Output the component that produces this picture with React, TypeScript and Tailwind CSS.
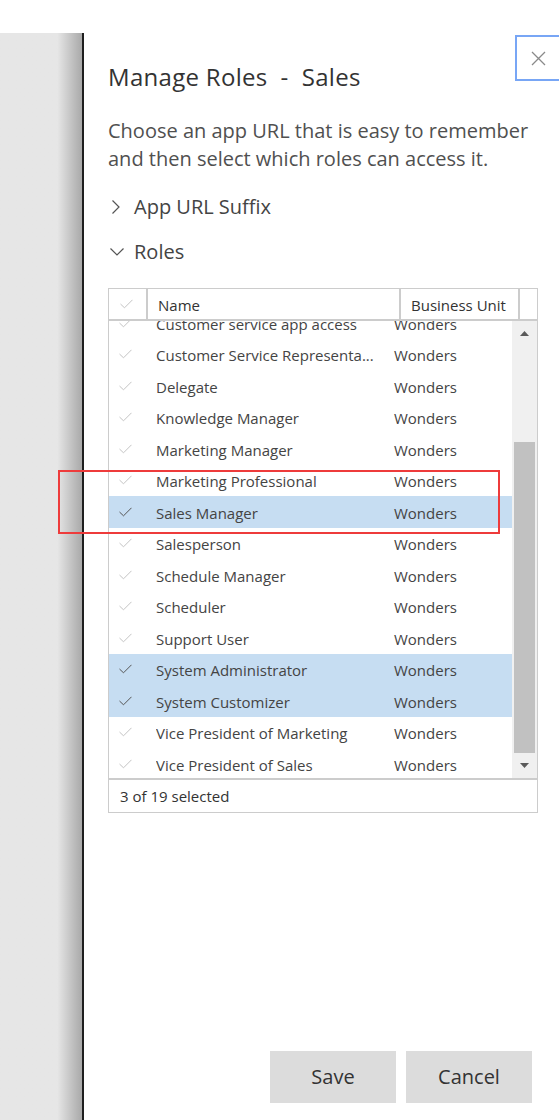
import React from 'react';

const FONT = { fontFamily: '"Open Sans", "Noto Sans", sans-serif' };

interface Role { name: string; unit: string; selected?: boolean }

const ROLES: Role[] = [
  { name: 'Customer service app access', unit: 'Wonders' },
  { name: 'Customer Service Representa...', unit: 'Wonders' },
  { name: 'Delegate', unit: 'Wonders' },
  { name: 'Knowledge Manager', unit: 'Wonders' },
  { name: 'Marketing Manager', unit: 'Wonders' },
  { name: 'Marketing Professional', unit: 'Wonders' },
  { name: 'Sales Manager', unit: 'Wonders', selected: true },
  { name: 'Salesperson', unit: 'Wonders' },
  { name: 'Schedule Manager', unit: 'Wonders' },
  { name: 'Scheduler', unit: 'Wonders' },
  { name: 'Support User', unit: 'Wonders' },
  { name: 'System Administrator', unit: 'Wonders', selected: true },
  { name: 'System Customizer', unit: 'Wonders', selected: true },
  { name: 'Vice President of Marketing', unit: 'Wonders' },
  { name: 'Vice President of Sales', unit: 'Wonders' },
];

function Check({ dark }: { dark?: boolean }) {
  return (
    <svg width="13" height="10" viewBox="0 0 13 10" fill="none">
      <polyline
        points="0.5,5 4.5,8.8 12.5,0.8"
        stroke={dark ? '#555555' : '#c4c4c4'}
        strokeWidth="1"
      />
    </svg>
  );
}

function Chevron({ open }: { open?: boolean }) {
  return open ? (
    <svg width="14" height="8" viewBox="0 0 14 8" fill="none">
      <polyline points="0.5,0.5 7,7 13.5,0.5" stroke="#555" strokeWidth="1.2" />
    </svg>
  ) : (
    <svg width="8" height="14" viewBox="0 0 8 14" fill="none">
      <polyline points="0.5,0.5 7,7 0.5,13.5" stroke="#555" strokeWidth="1.2" />
    </svg>
  );
}

function Triangle({ up }: { up?: boolean }) {
  return (
    <svg width="9" height="5" viewBox="0 0 9 5">
      <polygon points={up ? '4.5,0 9,5 0,5' : '0,0 9,0 4.5,5'} fill="#5a5a5a" />
    </svg>
  );
}

export default function App() {
  return (
    <div className="relative w-[559px] h-[1120px] bg-white overflow-hidden flex flex-col" style={FONT}>
      <div className="h-[33px] shrink-0" />
      <div className="flex flex-1 min-h-0">
        {/* page behind the panel */}
        <div className="w-[82px] shrink-0 bg-gradient-to-r from-[#e6e6e6] from-70% to-[#a9a9a9]" />
        <div className="w-[2px] shrink-0 bg-[#1e1e1e]" />

        {/* Panel */}
        <div className="flex-1 flex flex-col pl-[24px] min-w-0">
          <div className="flex items-start justify-between">
            <h1 className="mt-[29px] text-[24px] leading-[30px] tracking-[0.3px] text-[#333333] whitespace-pre">
              Manage Roles  -  Sales
            </h1>
            <button className="mt-[2px] w-[44px] h-[46px] border-l-2 border-t-2 border-b-2 border-[#78a6f5] flex items-center justify-center shrink-0">
              <svg width="15" height="15" viewBox="0 0 15 15">
                <path d="M1 1 L14 14 M14 1 L1 14" stroke="#8a8a8a" strokeWidth="1.3" />
              </svg>
            </button>
          </div>

          <p className="mt-[25px] text-[20px] leading-[28px] text-[#505050] pr-[20px]">
            Choose an app URL that is easy to remember and then select which roles can access it.
          </p>

          <div className="mt-[20px] flex items-center h-[28px] text-[20px] text-[#444444]">
            <span className="w-[26px] flex pl-[4px]"><Chevron /></span>
            <span>App URL Suffix</span>
          </div>
          <div className="mt-[17px] flex items-center h-[28px] text-[20px] text-[#444444]">
            <span className="w-[26px] flex pl-[2px]"><Chevron open /></span>
            <span>Roles</span>
          </div>

          {/* Roles grid */}
          <div className="mt-[22px] w-[430px] border border-[#cccccc] flex flex-col text-[15px] text-[#444444]">
            <div className="flex h-[32px] border-b-2 border-[#cccccc]">
              <div className="w-[39px] border-r-2 border-[#cccccc] flex items-center pl-[11px]">
                <Check />
              </div>
              <div className="w-[253px] border-r-2 border-[#cccccc] flex items-center pl-[10px] pt-[3px] text-[#333333]">
                Name
              </div>
              <div className="w-[119px] border-r-2 border-[#cccccc] flex items-center pl-[10px] pt-[3px] text-[#333333]">
                Business Unit
              </div>
              <div className="flex-1" />
            </div>

            <div className="flex h-[457px]">
              <div className="flex-1 overflow-hidden">
                <div className="-mt-[14px]">
                  {ROLES.map(r => (
                    <div
                      key={r.name}
                      className={`flex items-center h-[31.5px] pt-[2px] ${r.selected ? 'bg-[#c6ddf2]' : ''}`}
                    >
                      <div className="w-[47px] flex pl-[10px] -mt-[2px]"><Check dark={r.selected} /></div>
                      <div className="w-[238px] truncate pr-[8px]">{r.name}</div>
                      <div>{r.unit}</div>
                    </div>
                  ))}
                </div>
              </div>

              {/* scrollbar */}
              <div className="w-[25px] bg-[#f0f0f0] flex flex-col">
                <div className="h-[25px] flex items-center justify-center"><Triangle up /></div>
                <div className="flex-1 flex flex-col">
                  <div className="h-[96px]" />
                  <div className="flex-1 mx-[2px] bg-[#c1c1c1]" />
                </div>
                <div className="h-[25px] flex items-center justify-center"><Triangle /></div>
              </div>
            </div>

            <div className="h-[34px] border-t-2 border-[#cccccc] flex items-center pl-[11px] pt-[1px] text-[#333333]">
              3 of 19 selected
            </div>
          </div>

          <div className="flex-1" />

          <div className="flex justify-end gap-[10px] pr-[27px] pb-[17px]">
            <button className="w-[126px] h-[52px] bg-[#dcdcdc] text-[20px] text-[#333333]">Save</button>
            <button className="w-[126px] h-[52px] bg-[#dcdcdc] text-[20px] text-[#333333]">Cancel</button>
          </div>
        </div>
      </div>

      {/* annotation */}
      <div className="absolute left-[58px] top-[470px] w-[442px] h-[64px] border-2 border-[#ee3b3b] pointer-events-none" />
    </div>
  );
}
